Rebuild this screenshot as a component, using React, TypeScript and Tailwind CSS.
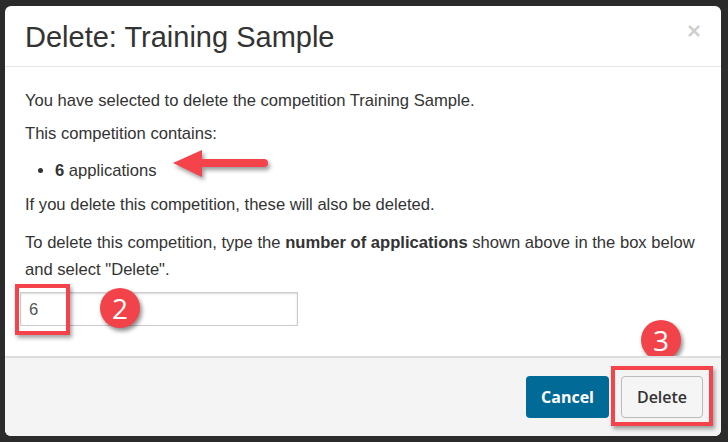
const sans = { fontFamily: '"Liberation Sans", Arial, sans-serif' };

function Badge({ n }: { n: string }) {
  return (
    <div
      className="w-[40px] h-[40px] rounded-full bg-[#f2434a] text-white flex items-center justify-center text-[28px] leading-none shadow-[2px_3px_4px_rgba(0,0,0,0.45)]"
      style={{ fontFamily: '"Open Sans", sans-serif' }}
    >
      {n}
    </div>
  );
}

function Arrow() {
  return (
    <svg width="104" height="40" viewBox="0 0 104 40" className="drop-shadow-[2px_3px_2px_rgba(0,0,0,0.4)]">
      <path d="M2 18 L31 5 L31 14 L93 14 A4 4 0 0 1 93 22 L31 22 L31 32 Z" fill="#f4434a" />
    </svg>
  );
}

export default function App() {
  return (
    <div className="w-[728px] h-[442px] bg-[#2b2b2b] pt-[6px] pl-[5px] overflow-hidden" style={sans}>
      <div className="w-[716px] h-[430px] bg-white rounded-[6px] flex flex-col overflow-hidden">
        <div className="h-[61px] shrink-0 border-b border-[#e5e5e5] pl-5 pr-[20px] flex items-center justify-between">
          <h4 className="text-[29px] text-[#333] leading-none pt-[2px]">Delete: Training Sample</h4>
          <span className="text-[24px] font-bold text-black/20 leading-none -mt-[10px]">×</span>
        </div>

        <div className="relative flex-1 px-5 pt-[20px] text-[16.6px] text-[#333] leading-[27px]">
          <p>You have selected to delete the competition Training Sample.</p>
          <p className="mt-[6px]">This competition contains:</p>
          <ul className="mt-[10px] pl-[30px] list-disc">
            <li>
              <b>6</b> applications
            </li>
          </ul>
          <p className="mt-[7px]">If you delete this competition, these will also be deleted.</p>
          <p className="mt-[11px]">
            To delete this competition, type the <b>number of applications</b> shown above in the box below
            <br />
            and select "Delete".
          </p>
          <div className="mt-[9px] -ml-[5px] w-[278px] h-[34px] border border-[#ccc] shadow-[inset_0_1px_2px_rgba(0,0,0,0.15)] px-[8px] flex items-center text-[#555]">
            6
          </div>

          <div className="absolute left-[166px] top-[78px]">
            <Arrow />
          </div>
          <div className="absolute left-[10px] top-[217px] w-[55px] h-[51px] border-4 border-[#f4434a] shadow-[2px_3px_4px_rgba(0,0,0,0.35)]" />
          <div className="absolute left-[95px] top-[221px]">
            <Badge n="2" />
          </div>
          <div className="absolute left-[636px] top-[253px]">
            <Badge n="3" />
          </div>
        </div>

        <div
          className="relative h-[80px] shrink-0 bg-[#f4f4f4] border-t-2 border-[#ddd] flex items-center justify-end gap-[12px] pr-[18px]"
          style={{ fontFamily: '"Open Sans", sans-serif' }}
        >
          <button className="w-[83px] h-[42px] rounded-[4px] bg-[#016a96] text-white text-[16px] font-bold">
            Cancel
          </button>
          <button className="w-[82px] h-[42px] rounded-[4px] bg-[#f5f5f5] border border-[#bbb] text-[#333] text-[16px] font-semibold">
            Delete
          </button>
          <div className="absolute left-[606px] top-[8px] w-[102px] h-[60px] border-4 border-[#f4434a] shadow-[2px_3px_4px_rgba(0,0,0,0.35)]" />
        </div>
      </div>
    </div>
  );
}
